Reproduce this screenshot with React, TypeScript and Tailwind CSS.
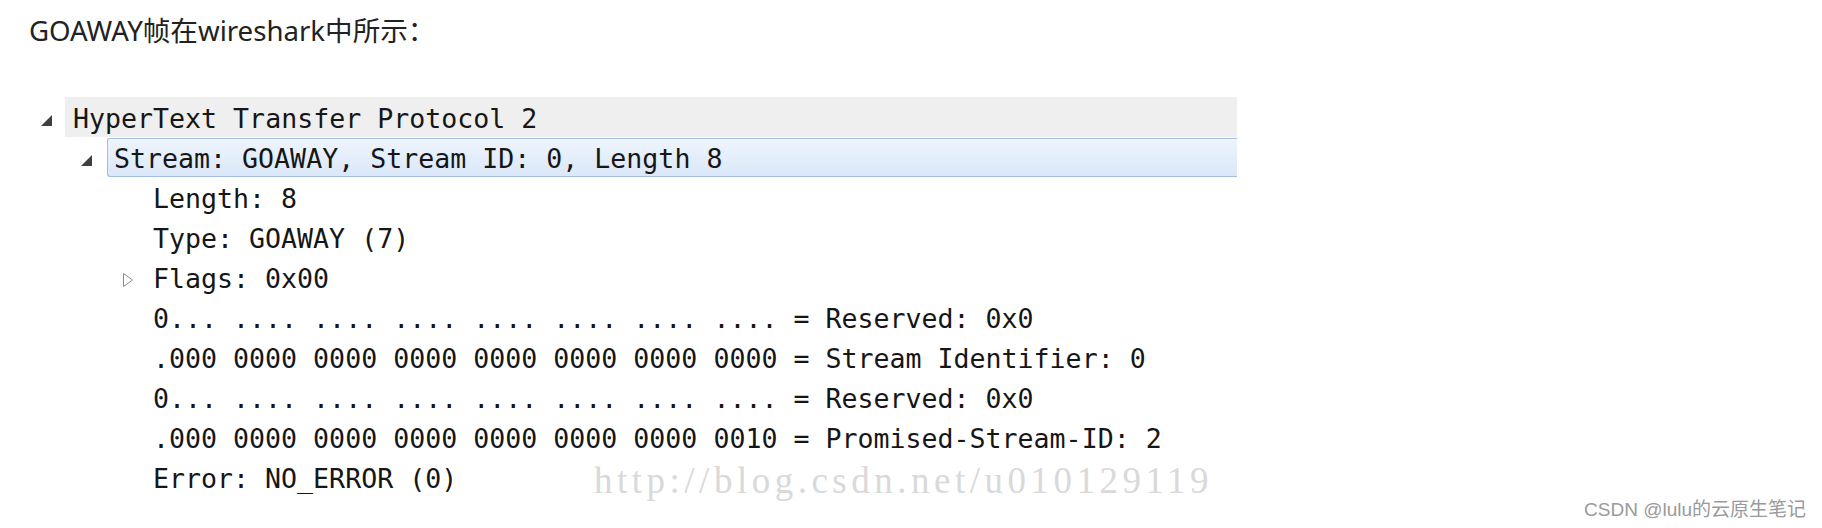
import React from 'react'

type Row = {
  level: number
  icon?: 'open' | 'closed'
  text: string
  kind?: 'gray' | 'selected'
}

const rows: Row[] = [
  { level: 0, icon: 'open', text: 'HyperText Transfer Protocol 2', kind: 'gray' },
  { level: 1, icon: 'open', text: 'Stream: GOAWAY, Stream ID: 0, Length 8', kind: 'selected' },
  { level: 2, text: 'Length: 8' },
  { level: 2, text: 'Type: GOAWAY (7)' },
  { level: 2, icon: 'closed', text: 'Flags: 0x00' },
  { level: 2, text: '0... .... .... .... .... .... .... .... = Reserved: 0x0' },
  { level: 2, text: '.000 0000 0000 0000 0000 0000 0000 0000 = Stream Identifier: 0' },
  { level: 2, text: '0... .... .... .... .... .... .... .... = Reserved: 0x0' },
  { level: 2, text: '.000 0000 0000 0000 0000 0000 0000 0010 = Promised-Stream-ID: 2' },
  { level: 2, text: 'Error: NO_ERROR (0)' },
]

function Expander({ icon }: { icon?: 'open' | 'closed' }) {
  return (
    <div className="w-[29px] h-full shrink-0 flex items-center pl-[5px]">
      {icon === 'open' && (
        <svg width="11" height="11" viewBox="0 0 11 11" className="mt-[7px]">
          <polygon points="11,0 11,11 0,11" fill="#3f3f3f" />
        </svg>
      )}
      {icon === 'closed' && (
        <svg width="11" height="14" viewBox="0 0 11 14" className="mt-[6px] ml-[2px]">
          <polygon points="0.5,0.5 9.5,7 0.5,13.5" fill="#fff" stroke="#8c8c8c" strokeWidth="1" />
        </svg>
      )}
    </div>
  )
}

function TreeRow({ row }: { row: Row }) {
  const indent = row.level === 0 ? 'w-0' : row.level === 1 ? 'w-[40px]' : 'w-[80px]'
  return (
    <div className="flex h-[40px] items-stretch">
      <div className={`${indent} shrink-0`} />
      <Expander icon={row.icon} />
      {row.kind === 'gray' && (
        <div className="flex-1 flex items-center pl-[8px] pt-[4px] bg-[#efefef]">
          <span>{row.text}</span>
        </div>
      )}
      {row.kind === 'selected' && (
        <div className="flex-1 flex items-center ml-[2px] mt-[1px] pl-[6px] pt-[3px] border border-r-0 border-[#a4bde3] rounded-l-[3px] bg-linear-to-b from-[#eef4fd] to-[#dbe8f9] shadow-[inset_0_1px_0_#f6f9fe]">
          <span>{row.text}</span>
        </div>
      )}
      {!row.kind && (
        <div className="flex-1 flex items-center pl-[8px] pt-[4px]">
          <span className="whitespace-pre">{row.text}</span>
        </div>
      )}
    </div>
  )
}

export default function App() {
  return (
    <div className="relative h-[528px] w-full overflow-hidden bg-white">
      <p className="pt-[12px] pl-[29px] text-[27.6px] leading-[36px] text-[#222] font-['Noto_Sans','Noto_Sans_CJK_SC',sans-serif]">
        GOAWAY帧在wireshark中所示：
      </p>

      <div className="mt-[49px] ml-[36px] w-[1201px] text-[26.6px] leading-[40px] text-[#161616] font-['DejaVu_Sans_Mono',monospace]">
        {rows.map((r, i) => (
          <TreeRow key={i} row={r} />
        ))}
      </div>

      <div className="absolute left-[594px] top-[462px] text-[37px] leading-[37px] tracking-[4.5px] text-[#d9d9d9] font-['Liberation_Serif',serif] whitespace-nowrap">
        http://blog.csdn.net/u010129119
      </div>

      <div className="absolute right-[16px] bottom-[6px] text-[19px] leading-[24px] text-[#9a9a9a] font-['Liberation_Sans','Noto_Sans_CJK_SC',sans-serif] [text-shadow:0_0_1px_#ffffff]">
        CSDN @lulu的云原生笔记
      </div>
    </div>
  )
}
